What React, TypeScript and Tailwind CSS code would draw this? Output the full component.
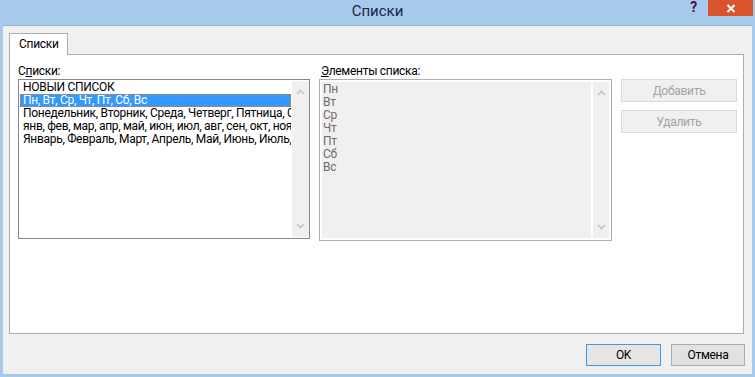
import React from 'react';

const lists = [
  'НОВЫЙ СПИСОК',
  'Пн, Вт, Ср, Чт, Пт, Сб, Вс',
  'Понедельник, Вторник, Среда, Четверг, Пятница, Суббота, Воскресенье',
  'янв, фев, мар, апр, май, июн, июл, авг, сен, окт, ноя, дек',
  'Январь, Февраль, Март, Апрель, Май, Июнь, Июль, Август, Сентябрь, Октябрь, Ноябрь, Декабрь',
];

const items = ['Пн', 'Вт', 'Ср', 'Чт', 'Пт', 'Сб', 'Вс'];

const Chevron: React.FC<{ down?: boolean }> = ({ down }) => (
  <svg width="9" height="6" viewBox="0 0 9 6" className="block">
    <polyline
      points={down ? '1,1 4.5,4.5 8,1' : '1,5 4.5,1.5 8,5'}
      fill="none"
      stroke="#c3c3c3"
      strokeWidth="1.6"
    />
  </svg>
);

const ScrollBar: React.FC<{ className?: string }> = ({ className }) => (
  <div className={`flex flex-col justify-between items-center bg-[#f0f0f0] py-[8px] ${className ?? ''}`}>
    <Chevron />
    <Chevron down />
  </div>
);

export default function App() {
  return (
    <div className="w-[755px] h-[377px] bg-[#a6caec] flex flex-col font-['Roboto','Liberation_Sans',Arial,sans-serif] text-[12px] tracking-[-0.3px] text-black select-none">
      {/* title bar */}
      <div className="h-[25px] grid grid-cols-[1fr_auto_1fr] items-start">
        <div />
        <div className="text-[15px] leading-[22px] tracking-normal text-[#23234a]">Списки</div>
        <div className="flex justify-end items-start pr-[2px]">
          <span className="text-[14px] leading-[12px] font-bold text-[#4a1040] mt-[1px] mr-[11px]">?</span>
          <div className="w-[45px] h-[16px] bg-[#d9532c] flex items-center justify-center">
            <svg width="10" height="9" viewBox="0 0 10 9">
              <path d="M1.5 1 L8.5 8 M8.5 1 L1.5 8" stroke="#fff" strokeWidth="2" />
            </svg>
          </div>
        </div>
      </div>

      {/* client area */}
      <div className="flex-1 mx-[3px] mb-[3px] border-t border-[#8fb3d4] bg-[#f0f0f0] flex flex-col pt-[7px] pl-[6px] pr-[8px]">
        <div className="flex">
          <div className="relative z-10 w-[59px] h-[22px] -mb-[1px] bg-white border border-b-0 border-[#adadad] pl-[9px] leading-[21px]">
            Списки
          </div>
        </div>

        <div className="h-[280px] bg-white border border-[#adadad] pl-[8px] pt-[9px] flex gap-[9px]">
          {/* lists */}
          <div className="w-[292px] flex flex-col">
            <div className="h-[15px] leading-[15px]">
              С<span className="underline">п</span>иски:
            </div>
            <div className="h-[160px] border border-[#828790] bg-white flex">
              <div className="flex-1 min-w-0 pt-[1px] px-[1px] overflow-hidden">
                {lists.map((t, i) => (
                  <div
                    key={t}
                    className={`h-[13px] leading-[13px] pl-[3px] whitespace-nowrap overflow-hidden ${
                      i === 1 ? 'bg-[#3399ff] text-white outline-1 outline-dotted outline-[#e8742c] -outline-offset-1' : ''
                    }`}
                  >
                    {t}
                  </div>
                ))}
              </div>
              <ScrollBar className="w-[17px] my-[1px]" />
            </div>
          </div>

          {/* elements */}
          <div className="w-[293px] flex flex-col">
            <div className="h-[15px] leading-[15px] pl-[2px]">
              <span className="underline">Э</span>лементы списка:
            </div>
            <div className="h-[162px] border border-[#adadad] bg-white p-[2px] flex gap-[2px]">
              <div className="flex-1 bg-[#f0f0f0] pt-[1px] pl-[1px] text-[#6f6a6a]">
                {items.map((t) => (
                  <div key={t} className="h-[13px] leading-[13px]">
                    {t}
                  </div>
                ))}
              </div>
              <ScrollBar className="w-[16px]" />
            </div>
          </div>

          {/* buttons */}
          <div className="w-[116px] pt-[15px] flex flex-col gap-[8px]">
            <div className="h-[23px] border border-[#d9d9d9] bg-[#f0f0f0] text-[#a3a3a3] flex items-center justify-center">
              Добавить
            </div>
            <div className="h-[23px] border border-[#d9d9d9] bg-[#f0f0f0] text-[#a3a3a3] flex items-center justify-center">
              Удалить
            </div>
          </div>
        </div>

        <div className="flex justify-end gap-[10px] pt-[10px] -mr-[1px]">
          <div className="w-[75px] h-[22px] border border-[#3c9be2] bg-[#e5e5e5] flex items-center justify-center">
            OK
          </div>
          <div className="w-[74px] h-[22px] border border-[#adadad] bg-[#e1e1e1] flex items-center justify-center">
            Отмена
          </div>
        </div>
      </div>
    </div>
  );
}
